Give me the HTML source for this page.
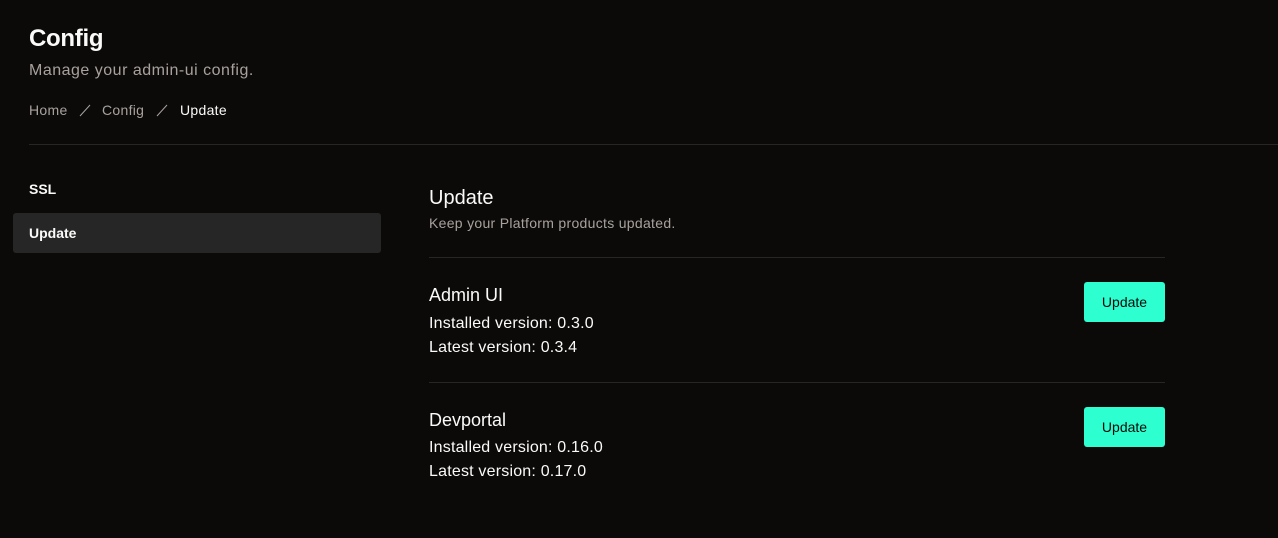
<!DOCTYPE html>
<html><head><style>
html,body{margin:0;padding:0;background:#0c0a09;width:1278px;height:538px;overflow:hidden;font-family:"Liberation Sans",sans-serif;color:#fafaf9}
.a{position:absolute;white-space:nowrap}
.btn{position:absolute;left:1084px;width:81px;height:40px;background:#2dffd0;border-radius:3px;color:#0c0a09;font-size:14px;line-height:40px;text-align:center}
.hr{position:absolute;height:1px;background:#292524}
</style></head><body>
<div class="a" style="left:29px;top:25px;font-size:24px;font-weight:bold;letter-spacing:-0.3px">Config</div>
<div class="a" style="left:29px;top:62px;font-size:16px;color:#a8a29e;letter-spacing:0.5px">Manage your admin-ui config.</div>
<div class="a" style="left:29px;top:102px;font-size:14px;color:#a8a29e;letter-spacing:0.3px">Home</div>
<svg class="a" style="left:78px;top:102px" width="14" height="16"><path d="M2 14L12 3" stroke="#a8a29e" stroke-width="1"/></svg>
<div class="a" style="left:102px;top:102px;font-size:14px;color:#a8a29e;letter-spacing:0.3px">Config</div>
<svg class="a" style="left:155px;top:102px" width="14" height="16"><path d="M2 14L12 3" stroke="#a8a29e" stroke-width="1"/></svg>
<div class="a" style="left:180px;top:102px;font-size:14px;color:#fafaf9;letter-spacing:0.3px">Update</div>
<div class="hr" style="left:29px;top:144px;width:1249px"></div>
<div class="a" style="left:29px;top:181px;font-size:14px;font-weight:bold">SSL</div>
<div class="a" style="left:13px;top:213px;width:368px;height:40px;background:#262626;border-radius:3px"></div>
<div class="a" style="left:29px;top:225px;font-size:14px;font-weight:bold">Update</div>
<div class="a" style="left:429px;top:187px;font-size:20px">Update</div>
<div class="a" style="left:429px;top:215px;font-size:14px;color:#a8a29e;letter-spacing:0.3px">Keep your Platform products updated.</div>
<div class="hr" style="left:429px;top:257px;width:736px"></div>
<div class="a" style="left:429px;top:285px;font-size:18px">Admin UI</div>
<div class="a" style="left:429px;top:312px;font-size:16px;line-height:24px;letter-spacing:0.2px">Installed version: 0.3.0<br>Latest version: 0.3.4</div>
<div class="btn" style="top:282px">Update</div>
<div class="hr" style="left:429px;top:382px;width:736px"></div>
<div class="a" style="left:429px;top:410px;font-size:18px">Devportal</div>
<div class="a" style="left:429px;top:436px;font-size:16px;line-height:24px;letter-spacing:0.2px">Installed version: 0.16.0<br>Latest version: 0.17.0</div>
<div class="btn" style="top:407px">Update</div>
</body></html>
